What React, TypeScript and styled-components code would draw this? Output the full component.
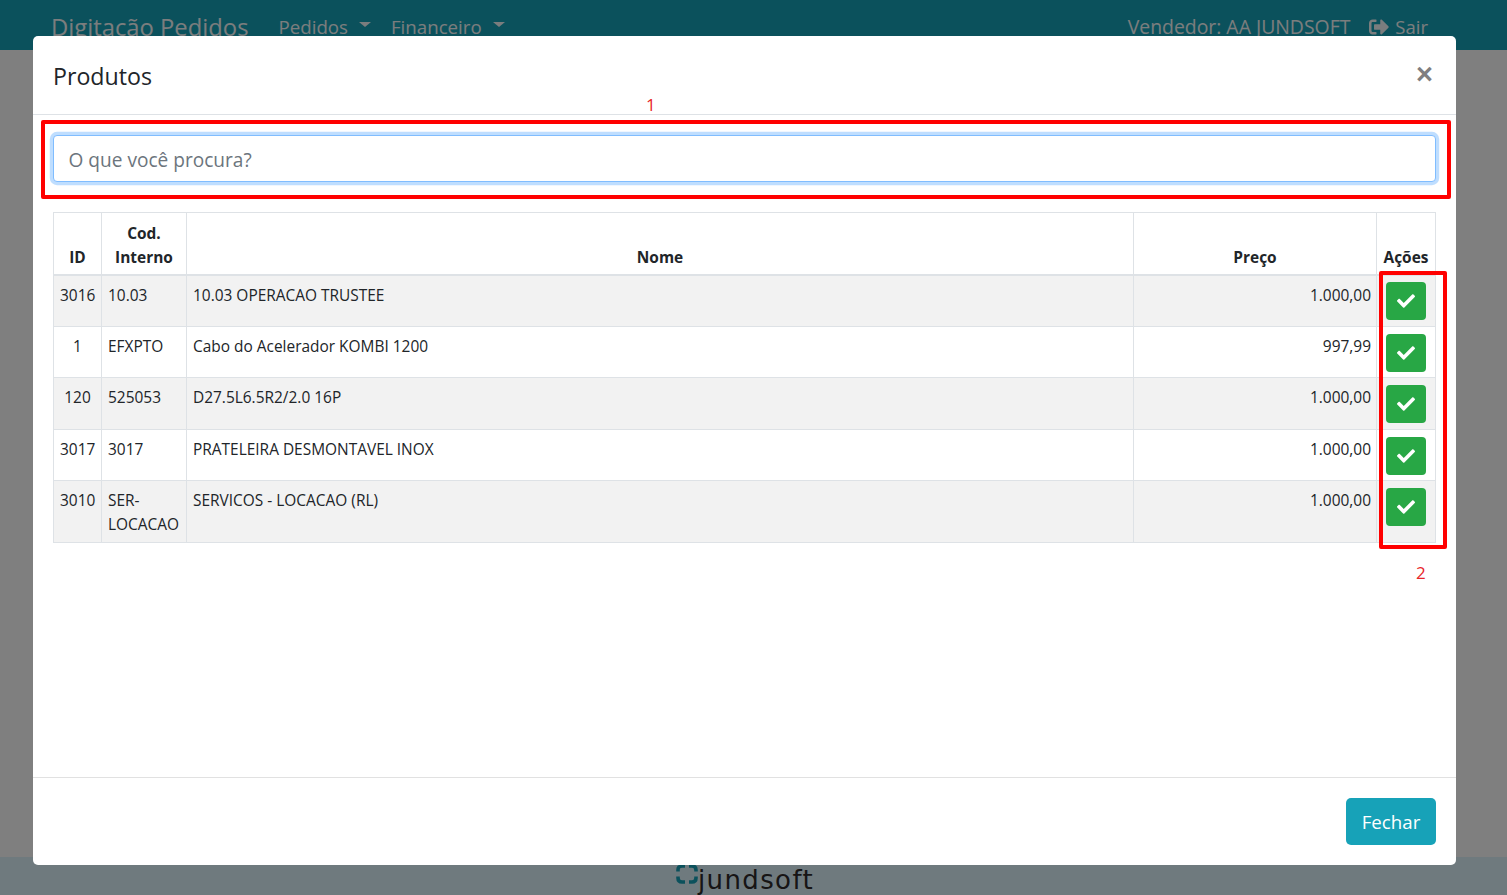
import React from 'react'
import styled, { createGlobalStyle } from 'styled-components'
import { FaCheck, FaSignOutAlt } from 'react-icons/fa'

const GlobalStyle = createGlobalStyle`
  html, body {
    margin: 0;
    padding: 0;
    height: 100%;
    overflow: hidden;
    background: #fff;
    font-family: "Open Sans", "Noto Sans", "Liberation Sans", sans-serif;
    color: #212529;
  }
  * {
    box-sizing: border-box;
  }
`

const Page = styled.div`
  height: 895px;
  display: flex;
  flex-direction: column;
  justify-content: space-between;
`

const Navbar = styled.nav`
  height: 50px;
  background: #17a2b8;
  display: flex;
  align-items: flex-start;
  padding: 11px 79px 0 51px;
  color: #f6fbfc;
`

const Brand = styled.div`
  font-size: 23.8px;
  line-height: 32px;
  margin-right: 30px;
`

const NavItem = styled.div`
  font-size: 18.7px;
  line-height: 32px;
  margin-right: 20px;
  display: flex;
  align-items: center;
`

const Caret = styled.span`
  width: 0;
  height: 0;
  margin-left: 11px;
  margin-top: -5px;
  border-top: 5px solid #f6fbfc;
  border-left: 6px solid transparent;
  border-right: 6px solid transparent;
`

const NavRight = styled.div`
  margin-left: auto;
  display: flex;
  align-items: center;
  gap: 19px;
  font-size: 18.5px;
  line-height: 32px;
`

const VendorName = styled.span`
  font-size: 19.4px;
`

const SairLink = styled.span`
  display: flex;
  align-items: center;
  gap: 6px;
`

const Footer = styled.footer`
  height: 38px;
  background: #def5fc;
  display: flex;
  justify-content: center;
  overflow: hidden;
`

const LogoWrap = styled.div`
  display: flex;
  align-items: flex-start;
  margin-left: -17px;
  padding-top: 7px;
`

const LogoText = styled.span`
  font-family: "DejaVu Sans", sans-serif;
  font-size: 26px;
  line-height: 30px;
  letter-spacing: 1.4px;
  color: #2e2a2b;
  margin-top: 1px;
`

const Backdrop = styled.div`
  position: fixed;
  inset: 0;
  background: rgba(0, 0, 0, 0.5);
`

const Modal = styled.div`
  position: absolute;
  left: 33px;
  top: 36px;
  width: 1423px;
  height: 829px;
  background: #fff;
  border-radius: 5px;
  display: flex;
  flex-direction: column;
`

const ModalHeader = styled.header`
  height: 79px;
  flex: none;
  display: flex;
  align-items: center;
  justify-content: space-between;
  padding: 2px 23px 0 20px;
  border-bottom: 1px solid #dee2e6;
`

const ModalTitle = styled.h5`
  margin: 0;
  font-size: 23.2px;
  font-weight: 400;
  line-height: 36px;
`

const CloseButton = styled.button`
  border: 0;
  background: none;
  padding: 0;
  margin-top: -3px;
  color: #7f7f7f;
  font-family: "Liberation Sans", sans-serif;
  font-size: 29px;
  font-weight: 700;
  line-height: 1;
`

const ModalBody = styled.div`
  flex: 1;
  padding: 20px 20px 0;
`

const SearchInput = styled.input`
  display: block;
  width: 100%;
  height: 47px;
  padding: 2px 14.5px 0;
  border: 1px solid #80bdff;
  border-radius: 4px;
  outline: 0;
  box-shadow: 0 0 0 3.2px rgba(0, 123, 255, 0.25);
  font-family: inherit;
  font-size: 19.1px;
  color: #495057;

  &::placeholder {
    color: #6c757d;
    opacity: 1;
  }
`

const Table = styled.table`
  width: 100%;
  margin-top: 30px;
  border-collapse: collapse;
  table-layout: fixed;
  font-size: 15.45px;
  line-height: 24px;
`

const HeadRow = styled.tr`
  height: 62px;
`

const HeadCell = styled.th<{ $width?: number }>`
  width: ${({ $width }) => ($width ? `${$width}px` : 'auto')};
  padding: 6px 6px 5px;
  border: 1px solid #dee2e6;
  border-bottom-width: 2px;
  text-align: center;
  vertical-align: bottom;
  font-weight: 700;
`

const BodyRow = styled.tr<{ $striped: boolean; $height: number }>`
  height: ${({ $height }) => $height}px;
  background: ${({ $striped }) => ($striped ? '#f2f2f2' : '#fff')};
`

const Cell = styled.td<{ $align?: string }>`
  padding: 7px ${({ $align }) => ($align === 'right' ? '5px' : '6px')} 5px 6px;
  border: 1px solid #dee2e6;
  vertical-align: top;
  text-align: ${({ $align }) => $align || 'left'};
`

const ActionCell = styled.td`
  padding: 6px;
  border: 1px solid #dee2e6;
  vertical-align: top;

  tr + tr > & {
    padding-top: 7px;
    padding-bottom: 5px;
  }
`

const ActionButton = styled.button`
  display: flex;
  align-items: center;
  justify-content: center;
  width: 40px;
  height: 38px;
  margin: 0 auto;
  padding: 0;
  border: 0;
  border-radius: 4px;
  background: #28a745;
  color: #fff;
  font-size: 18px;
`

const ModalFooter = styled.div`
  height: 88px;
  flex: none;
  display: flex;
  justify-content: flex-end;
  align-items: flex-start;
  padding: 20px 20px 0;
  border-top: 1px solid #e1e1e1;
`

const CloseAction = styled.button`
  width: 90px;
  height: 47px;
  border: 0;
  border-radius: 5px;
  background: #17a2b8;
  color: #fff;
  font-family: inherit;
  font-size: 18.7px;
`

// anotacoes em vermelho por cima do modal
const RedBox = styled.div<{ $left: number; $top: number; $width: number; $height: number }>`
  position: absolute;
  left: ${({ $left }) => $left}px;
  top: ${({ $top }) => $top}px;
  width: ${({ $width }) => $width}px;
  height: ${({ $height }) => $height}px;
  border: 4px solid #ff0000;
  border-radius: 2px;
  pointer-events: none;
`

const RedLabel = styled.span<{ $left: number; $top: number }>`
  position: absolute;
  left: ${({ $left }) => $left}px;
  top: ${({ $top }) => $top}px;
  color: #e8262a;
  font-family: "Open Sans", sans-serif;
  font-size: 17px;
  line-height: 20px;
`

const produtos = [
  { id: '3016', cod: '10.03', nome: '10.03 OPERACAO TRUSTEE', preco: '1.000,00', altura: 51 },
  { id: '1', cod: 'EFXPTO', nome: 'Cabo do Acelerador KOMBI 1200', preco: '997,99', altura: 51 },
  { id: '120', cod: '525053', nome: 'D27.5L6.5R2/2.0 16P', preco: '1.000,00', altura: 52 },
  { id: '3017', cod: '3017', nome: 'PRATELEIRA DESMONTAVEL INOX', preco: '1.000,00', altura: 51 },
  { id: '3010', cod: 'SER-LOCACAO', nome: 'SERVICOS - LOCACAO (RL)', preco: '1.000,00', altura: 62 },
]

const App = () => {
  return (
    <>
      <GlobalStyle />
      <Page>
        <Navbar>
          <Brand>Digitação Pedidos</Brand>
          <NavItem>
            Pedidos
            <Caret />
          </NavItem>
          <NavItem>
            Financeiro
            <Caret />
          </NavItem>
          <NavRight>
            <VendorName>Vendedor: AA JUNDSOFT</VendorName>
            <SairLink>
              <FaSignOutAlt size={20} />
              Sair
            </SairLink>
          </NavRight>
        </Navbar>
        <Footer>
          <LogoWrap>
            <svg width="22" height="20" viewBox="0 0 22 20" aria-hidden="true">
              <path
                d="M9 2H6C3.2 2 2 3.5 2 6V7.5M13 2H16C18.8 2 20 3.5 20 6V7.5M2 12.5V14C2 16.5 3.2 18 6 18H9M20 12.5V14C20 16.5 18.8 18 16 18H13"
                fill="none"
                stroke="#17a2b8"
                strokeWidth="3.6"
              />
            </svg>
            <LogoText>jundsoft</LogoText>
          </LogoWrap>
        </Footer>
      </Page>
      <Backdrop>
        <Modal>
          <ModalHeader>
            <ModalTitle>Produtos</ModalTitle>
            <CloseButton>×</CloseButton>
          </ModalHeader>
          <ModalBody>
            <SearchInput placeholder="O que você procura?" />
            <Table>
              <thead>
                <HeadRow>
                  <HeadCell $width={48}>ID</HeadCell>
                  <HeadCell $width={85}>Cod. Interno</HeadCell>
                  <HeadCell>Nome</HeadCell>
                  <HeadCell $width={243}>Preço</HeadCell>
                  <HeadCell $width={59}>Ações</HeadCell>
                </HeadRow>
              </thead>
              <tbody>
                {produtos.map((produto, index) => (
                  <BodyRow key={produto.id} $striped={index % 2 === 0} $height={produto.altura}>
                    <Cell $align="center">{produto.id}</Cell>
                    <Cell>{produto.cod}</Cell>
                    <Cell>{produto.nome}</Cell>
                    <Cell $align="right">{produto.preco}</Cell>
                    <ActionCell>
                      <ActionButton>
                        <FaCheck />
                      </ActionButton>
                    </ActionCell>
                  </BodyRow>
                ))}
              </tbody>
            </Table>
          </ModalBody>
          <ModalFooter>
            <CloseAction>Fechar</CloseAction>
          </ModalFooter>
          <RedBox $left={8} $top={84} $width={1410} $height={79} />
          <RedBox $left={1346} $top={235} $width={68} $height={278} />
          <RedLabel $left={613} $top={59}>1</RedLabel>
          <RedLabel $left={1383} $top={527}>2</RedLabel>
        </Modal>
      </Backdrop>
    </>
  )
}

export default App
